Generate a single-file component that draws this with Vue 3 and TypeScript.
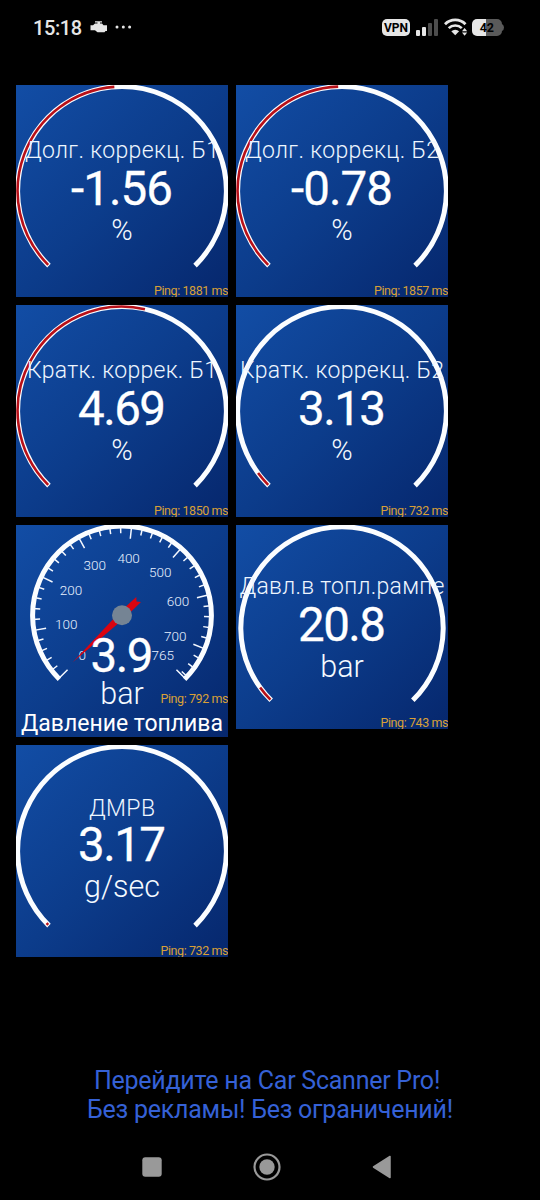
<script setup lang="ts">
type Gauge = {
  title: string;
  titleY: number;
  titleWidth: number;
  value: string;
  valueY: number;
  valueWidth: number;
  unit: string;
  unitY: number;
  unitSize: number;
  ping: string;
  pingY: number;
  height: number;
  cy: number;
  r: number;
  sweep: number;
  dial?: boolean;
};

const base = {
  titleY: 73.4, valueY: 119.7, valueWidth: 88, unitY: 154.5, unitSize: 29,
  pingY: 209.8, height: 212, cy: 106, r: 104.4,
};

const gauges: Gauge[] = [
  { ...base, title: 'Долг. коррекц. Б1', titleWidth: 194, value: '-1.56', valueWidth: 102, unit: '%', ping: '1881', sweep: 130.8 },
  { ...base, title: 'Долг. коррекц. Б2', titleWidth: 194, value: '-0.78', valueWidth: 102, unit: '%', ping: '1857', sweep: 132.9 },
  { ...base, title: 'Кратк. коррек. Б1', titleWidth: 190, value: '4.69', unit: '%', ping: '1850', sweep: 147.7 },
  { ...base, title: 'Кратк. коррекц. Б2', titleWidth: 204, value: '3.13', unit: '%', ping: '732', sweep: 8.5 },
  {
    ...base, title: 'Давление топлива', titleY: 206.3, titleWidth: 202, value: '3.9', valueY: 146.7, valueWidth: 63,
    unit: 'bar', unitY: 178.6, unitSize: 30.5, ping: '792', pingY: 177.8,
    cy: 90.3, r: 89.4, sweep: 1.4, dial: true,
  },
  {
    ...base, title: 'Давл.в топл.рампе', titleY: 68.8, titleWidth: 205, value: '20.8', valueY: 115.7,
    unit: 'bar', unitY: 151.6, unitSize: 30.5, ping: '743', pingY: 201.8,
    height: 204, cy: 103, r: 101.2, sweep: 9,
  },
  {
    ...base, title: 'ДМРВ', titleY: 71, titleWidth: 66, value: '3.17', valueY: 115.7,
    unit: 'g/sec', unitY: 151.6, unitSize: 30.5, ping: '732', sweep: 1.3,
  },
];

const CX = 106;
const DIAL_MAX = 765;

// sweep is counted clockwise from the lower left end of the scale
function point(g: Gauge, sweep: number, r: number) {
  const a = ((135 + sweep) * Math.PI) / 180;
  return { x: CX + r * Math.cos(a), y: g.cy + r * Math.sin(a) };
}

function arc(g: Gauge, from: number, to: number) {
  const a = point(g, from, g.r);
  const b = point(g, to, g.r);
  const large = to - from > 180 ? 1 : 0;
  return `M${a.x} ${a.y}A${g.r} ${g.r} 0 ${large} 1 ${b.x} ${b.y}`;
}

const marks = [0, 100, 200, 300, 400, 500, 600, 700, DIAL_MAX];

function ticks(g: Gauge) {
  let d = '';
  for (let v = 0; v <= DIAL_MAX; v += 20) {
    const a = point(g, (v / DIAL_MAX) * 270, g.r);
    const b = point(g, (v / DIAL_MAX) * 270, v % 100 === 0 ? 77 : 82);
    d += `M${a.x} ${a.y}L${b.x} ${b.y}`;
  }
  const a = point(g, 270, g.r);
  const b = point(g, 270, 77);
  return d + `M${a.x} ${a.y}L${b.x} ${b.y}`;
}

function label(g: Gauge, v: number) {
  return point(g, (v / DIAL_MAX) * 270, 57);
}
</script>

<template>
  <div class="screen">
    <header class="status">
      <span class="time">15:18</span>
      <svg class="engine" width="18" height="12" viewBox="0 0 18 12">
        <path d="M5 0.300H12V1.500H10V2.400H12L13.500 4.200H17V10H15.500L14.500 11.300H7.500L5 9.200H0.500V4.200H3L5 2.400H7.500V1.500H5z" fill="#e6e6e6" />
      </svg>
      <svg class="dots" width="18" height="4" viewBox="0 0 18 4">
        <circle v-for="x in [2, 8.300, 14.600]" :key="x" :cx="x" cy="2" r="1.500" fill="#e6e6e6" />
      </svg>
      <span class="vpn">VPN</span>
      <svg class="signal" width="22" height="17" viewBox="0 0 22 17">
        <rect x="0" y="11" width="4" height="6" rx="1" fill="#e6e6e6" />
        <rect x="6" y="8" width="4" height="9" rx="1" fill="#e6e6e6" />
        <rect x="12" y="4" width="4" height="13" rx="1" fill="#4d4d4d" />
        <rect x="18" y="0" width="4" height="17" rx="1" fill="#4d4d4d" />
      </svg>
      <svg class="wifi" width="24" height="18" viewBox="0 0 24 18">
        <path d="M1 6.200a14.500 14.500 0 0 1 20.500 0" fill="none" stroke="#e6e6e6" stroke-width="2.800" />
        <path d="M4.700 10.200a9.300 9.300 0 0 1 13.100 0" fill="none" stroke="#e6e6e6" stroke-width="2.600" />
        <path d="M7.300 13.200a5.700 5.700 0 0 1 7.800 0L11.200 17.300z" fill="#e6e6e6" />
        <path d="M18 13.200l2.600-3.200 2.600 3.200zM18 14.600h5.200l-2.600 3.200z" fill="#e6e6e6" />
      </svg>
      <svg class="battery" width="32" height="17" viewBox="0 0 32 17">
        <path d="M5 0H14V17H5a5 5 0 0 1-5-5V5a5 5 0 0 1 5-5z" fill="#e6e6e6" />
        <path d="M14 0H25a5 5 0 0 1 5 5q2 1 2 3.500T30 12a5 5 0 0 1-5 5H14z" fill="#5a5a5a" />
        <text x="14.800" y="13" class="level">42</text>
      </svg>
    </header>

    <main class="grid">
      <svg
        v-for="g in gauges"
        :key="g.title"
        class="gauge"
        width="212"
        :height="g.height"
        :viewBox="`0 0 212 ${g.height}`"
      >
        <defs>
          <linearGradient id="panel" x1="0" y1="0" x2="1" y2="1">
            <stop offset="0" stop-color="#124da5" />
            <stop offset="0.500" stop-color="#0c3c8b" />
            <stop offset="1" stop-color="#06276d" />
          </linearGradient>
        </defs>
        <rect width="212" :height="g.height" fill="url(#panel)" />
        <path :d="arc(g, -0.6, 270.6)" class="rail" />

        <template v-if="g.dial">
          <path :d="ticks(g)" class="ticks" />
          <text
            v-for="m in marks"
            :key="m"
            :x="label(g, m).x + 0.5"
            :y="label(g, m).y + 4"
            class="mark"
          >{{ m }}</text>
          <g :transform="`translate(${CX} ${g.cy}) rotate(${135 + g.sweep})`">
            <path d="M68 0L0 3.800L-23 3.400L-20 0L-23 -3.400L0 -3.800z" fill="#d90410" />
          </g>
          <circle :cx="CX" :cy="g.cy" r="10" fill="#758494" />
        </template>
        <path v-else :d="arc(g, 0, g.sweep)" class="filled" />

        <text
          x="106"
          :y="g.titleY"
          :textLength="g.titleWidth"
          :class="['title', { strong: g.dial }]"
        >{{ g.title }}</text>
        <text x="106" :y="g.valueY" :textLength="g.valueWidth" class="value">{{ g.value }}</text>
        <text x="106" :y="g.unitY" :font-size="g.unitSize" class="unit">{{ g.unit }}</text>
        <text
          x="212.5"
          :y="g.pingY"
          :textLength="g.ping.length > 3 ? 74.5 : 68"
          class="ping"
        >Ping: {{ g.ping }} ms</text>
      </svg>
    </main>

    <p class="promo">Перейдите на Car Scanner Pro!&nbsp;<br />Без рекламы! Без ограничений!</p>

    <nav class="nav">
      <svg width="20" height="20" viewBox="0 0 20 20">
        <rect x="0.300" y="0.300" width="19.400" height="19.400" rx="3" fill="#999" />
      </svg>
      <svg width="28" height="28" viewBox="0 0 28 28">
        <circle cx="14" cy="14" r="12.500" fill="none" stroke="#999" stroke-width="2.200" />
        <circle cx="14" cy="14" r="7.700" fill="#999" />
      </svg>
      <svg width="20" height="24" viewBox="0 0 20 24">
        <path d="M1.500 12L18 1.500V22.500z" fill="#999" stroke="#999" stroke-width="1.500" stroke-linejoin="round" />
      </svg>
    </nav>
  </div>
</template>

<style>
body {
  margin: 0;
  background: #000;
}
</style>

<style scoped>
.screen {
  display: flex;
  flex-direction: column;
  width: 540px;
  height: 1200px;
  background: #000;
  font-family: Roboto, "Noto Sans", sans-serif;
  overflow: hidden;
}

.status {
  display: flex;
  align-items: center;
  box-sizing: border-box;
  height: 54px;
  padding: 0 36px 0 33px;
}

.time {
  width: 49px;
  padding-top: 1px;
  color: #e6e6e6;
  font-size: 20px;
  font-weight: 500;
  letter-spacing: -0.4px;
}

.engine {
  margin-left: 8px;
}

.dots {
  margin-left: 7px;
}

.vpn {
  width: 28px;
  height: 17px;
  margin-left: auto;
  border-radius: 5px;
  background: #e6e6e6;
  color: #000;
  font-size: 12px;
  font-weight: 700;
  line-height: 18px;
  text-align: center;
}

.signal {
  margin-left: 6px;
}

.wifi {
  margin-left: 6px;
}

.battery {
  margin-left: 4px;
}

.level {
  font-size: 12.5px;
  font-weight: 700;
  text-anchor: middle;
}

.grid {
  display: grid;
  grid-template-columns: 212px 212px;
  gap: 8px;
  align-items: start;
  padding: 31px 16px 0;
}

.gauge {
  display: block;
  overflow: hidden;
}

.rail {
  fill: none;
  stroke: #fbfdff;
  stroke-width: 5;
}

.filled {
  fill: none;
  stroke: #b81018;
  stroke-width: 2.6;
}

.ticks {
  fill: none;
  stroke: #f4f8ff;
  stroke-width: 1.5;
}

.mark {
  fill: #e8f2ff;
  font-size: 13.5px;
  font-weight: 300;
  text-anchor: middle;
}

.title {
  fill: #eef6ff;
  font-size: 23px;
  font-weight: 300;
  text-anchor: middle;
}

.strong {
  fill: #fff;
  font-weight: 400;
}

.value {
  fill: #fff;
  stroke: #fff;
  stroke-width: 0.3;
  font-size: 47.5px;
  font-weight: 400;
  text-anchor: middle;
}

.unit {
  fill: #f4faff;
  font-weight: 300;
  text-anchor: middle;
}

.ping {
  fill: #d9a036;
  font-size: 12.5px;
  text-anchor: end;
}

.promo {
  margin: 109px 0 0;
  color: #3561d6;
  font-size: 25px;
  line-height: 29px;
  letter-spacing: -0.25px;
  text-align: center;
}

.nav {
  display: flex;
  justify-content: space-between;
  align-items: center;
  width: 250px;
  margin: 29px 0 0 142px;
}
</style>
